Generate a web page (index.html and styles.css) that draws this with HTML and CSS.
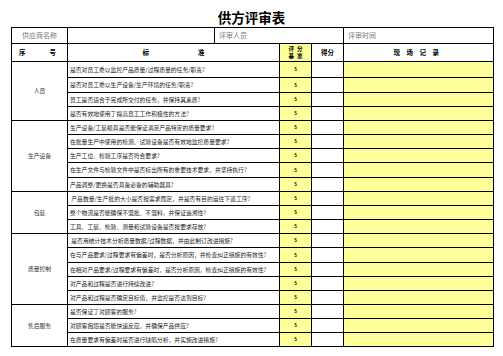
FILE: index.html
```html
<!DOCTYPE html>
<html lang="zh-CN">
<head>
<meta charset="UTF-8">
<meta name="viewport" content="width=device-width, initial-scale=1.0">
<title>供方评审表</title>
<link rel="stylesheet" href="styles.css">
</head>
<body>

<h1 class="title">供方评审表</h1>

<table class="review">
  <colgroup>
    <col class="c-no">
    <col class="c-std-a">
    <col class="c-std-b">
    <col class="c-base">
    <col class="c-score">
    <col class="c-note">
  </colgroup>
  <thead>
    <tr class="info-row">
      <td class="info center">供应商名称</td>
      <td></td>
      <td class="info" colspan="3">评审人员</td>
      <td class="info">评审时间</td>
    </tr>
    <tr class="head-row">
      <th><span class="spread"><span>序</span><span>号</span></span></th>
      <th colspan="2"><span class="spread wide"><span>标</span><span>准</span></span></th>
      <th class="base-head">评分<br>基准</th>
      <th>得分</th>
      <th class="note-head">现场记录</th>
    </tr>
  </thead>
  <tbody>
    <!-- 人员 -->
    <tr class="tall">
      <td class="group" rowspan="4">人员</td>
      <td colspan="2">是否对员工委以监控产品质量/过程质量的任务/职责?</td>
      <td class="base">5</td><td></td><td class="note"></td>
    </tr>
    <tr class="mid">
      <td colspan="2">是否对员工委以生产设备/生产环境的任务/职责?</td>
      <td class="base">5</td><td></td><td class="note"></td>
    </tr>
    <tr>
      <td colspan="2">员工是否适合于完成所交付的任务，并保持其素质?</td>
      <td class="base">5</td><td></td><td class="note"></td>
    </tr>
    <tr>
      <td colspan="2">是否有效地使用了提高员工工作积极性的方法?</td>
      <td class="base">5</td><td></td><td class="note"></td>
    </tr>

    <!-- 生产设备 -->
    <tr>
      <td class="group" rowspan="5">生产设备</td>
      <td colspan="2">生产设备/工装模具是否能保证满足产品特定的质量要求?</td>
      <td class="base">5</td><td></td><td class="note"></td>
    </tr>
    <tr>
      <td colspan="2">在批量生产中使用的检测、试验设备是否有效地监控质量要求?</td>
      <td class="base">5</td><td></td><td class="note"></td>
    </tr>
    <tr>
      <td colspan="2">生产工位、检验工序是否符合要求?</td>
      <td class="base">5</td><td></td><td class="note"></td>
    </tr>
    <tr class="mid">
      <td colspan="2">在生产文件与检验文件中是否标出所有的重要技术要求，并坚持执行?</td>
      <td class="base">5</td><td></td><td class="note"></td>
    </tr>
    <tr>
      <td colspan="2">产品调整/更换是否具备必备的辅助器具?</td>
      <td class="base">5</td><td></td><td class="note"></td>
    </tr>

    <!-- 包装 -->
    <tr>
      <td class="group" rowspan="3">包装</td>
      <td colspan="2">&nbsp;产品数量/生产批的大小是否按需求而定，并是否有目的运往下道工序?</td>
      <td class="base">5</td><td></td><td class="note"></td>
    </tr>
    <tr>
      <td colspan="2">整个物流是否能确保不混批、不混料，并保证追溯性?</td>
      <td class="base">5</td><td></td><td class="note"></td>
    </tr>
    <tr>
      <td colspan="2">工具、工装、检验、测量和试验设备是否按要求存放?</td>
      <td class="base">5</td><td></td><td class="note"></td>
    </tr>

    <!-- 质量控制 -->
    <tr>
      <td class="group" rowspan="5">质量控制</td>
      <td colspan="2">&nbsp;是否用统计技术分析质量数据/过程数据，并由此制订改进措施?</td>
      <td class="base">5</td><td></td><td class="note"></td>
    </tr>
    <tr class="mid">
      <td colspan="2">在与产品要求/过程要求有偏差时，是否分析原因，并检查纠正措施的有效性?</td>
      <td class="base">5</td><td></td><td class="note"></td>
    </tr>
    <tr>
      <td colspan="2">在相对产品要求/过程要求有偏差时，是否分析原因，检查纠正措施的有效性?</td>
      <td class="base">5</td><td></td><td class="note"></td>
    </tr>
    <tr>
      <td colspan="2">对产品和过程是否进行持续改进?</td>
      <td class="base">5</td><td></td><td class="note"></td>
    </tr>
    <tr>
      <td colspan="2">对产品和过程是否确定目标值，并监控是否达到目标?</td>
      <td class="base">5</td><td></td><td class="note"></td>
    </tr>

    <!-- 售后服务 -->
    <tr>
      <td class="group" rowspan="3">售后服务</td>
      <td colspan="2">是否保证了对顾客的服务?</td>
      <td class="base">5</td><td></td><td class="note"></td>
    </tr>
    <tr>
      <td colspan="2">对顾客抱怨是否能快速反应，并确保产品供应?</td>
      <td class="base">5</td><td></td><td class="note"></td>
    </tr>
    <tr>
      <td colspan="2">在质量要求有偏差时是否进行缺陷分析，并实施改进措施?</td>
      <td class="base">5</td><td></td><td class="note"></td>
    </tr>
  </tbody>
</table>

</body>
</html>
```

FILE: styles.css
```css
body {
  margin: 0;
  background: #fff;
  font-family: "Noto Sans CJK SC", "Liberation Serif", serif;
  color: #222;
}
.title {
  margin: 0;
  height: 27px;
  line-height: 34px;
  font-size: 13.5px;
  font-weight: bold;
  text-align: center;
  color: #000;
}
.review {
  margin-left: 11px;
  width: 483px;
  table-layout: fixed;
  border-collapse: collapse;
  border: 1px solid #000;
}
.c-no { width: 56px; }
.c-std-a { width: 147px; }
.c-std-b { width: 65px; }
.c-base { width: 32px; }
.c-score { width: 32px; }
.c-note { width: 150px; }

.review td, .review th {
  border: 1px solid #000;
  padding: 0 0 0 2px;
  font-size: 5.8px;
  line-height: 1;
  text-align: left;
  vertical-align: middle;
  white-space: nowrap;
  overflow: hidden;
}
.info-row { height: 16px; }
.review td.info {
  font-size: 7px;
  color: #777;
  padding-left: 4px;
}
.review td.center { text-align: center; padding-left: 0; }

.head-row { height: 18px; }
.review th {
  font-size: 6.5px;
  font-weight: bold;
  color: #000;
  text-align: center;
  padding: 0;
}
.spread {
  display: flex;
  justify-content: space-between;
  padding: 0 11px 0 7px;
}
.spread.wide {
  justify-content: center;
  gap: 49px;
  padding: 0;
}
.review th.base-head {
  background: #ffff99;
  font-size: 5.5px;
  letter-spacing: 3px;
  line-height: 1.2;
  padding-left: 3px;
}
.review th.note-head {
  letter-spacing: 6.5px;
  padding-left: 2px;
}

.review tbody tr { height: 14px; }
.review tbody tr.mid { height: 15px; }
.review tbody tr.tall { height: 16px; }
.review td.group {
  text-align: center;
  padding: 0;
  color: #333;
}
.review td.base {
  background: #ffff99;
  text-align: center;
  padding: 0;
  font-size: 4.5px;
  font-weight: bold;
  color: #000;
}
.review td.note {
  background: #ffff99;
}
```
